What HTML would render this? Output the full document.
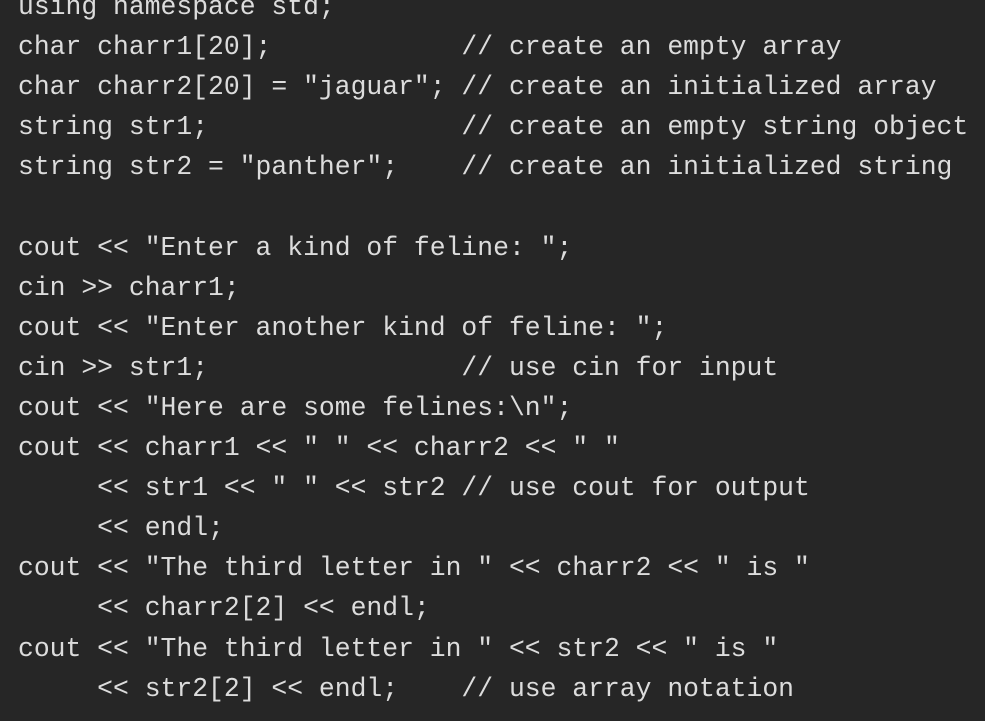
<!DOCTYPE html>
<html><head><style>
html,body{margin:0;padding:0;width:985px;height:721px;overflow:hidden;background:#262626;}
pre{position:absolute;left:18px;top:-13px;margin:0;font-family:"Liberation Mono",monospace;font-size:26.4px;line-height:40.1px;color:#dcdcdc;}
</style></head><body><pre>using namespace std;
char charr1[20];            // create an empty array
char charr2[20] = "jaguar"; // create an initialized array
string str1;                // create an empty string object
string str2 = "panther";    // create an initialized string

cout &lt;&lt; "Enter a kind of feline: ";
cin &gt;&gt; charr1;
cout &lt;&lt; "Enter another kind of feline: ";
cin &gt;&gt; str1;                // use cin for input
cout &lt;&lt; "Here are some felines:\n";
cout &lt;&lt; charr1 &lt;&lt; " " &lt;&lt; charr2 &lt;&lt; " "
     &lt;&lt; str1 &lt;&lt; " " &lt;&lt; str2 // use cout for output
     &lt;&lt; endl;
cout &lt;&lt; "The third letter in " &lt;&lt; charr2 &lt;&lt; " is "
     &lt;&lt; charr2[2] &lt;&lt; endl;
cout &lt;&lt; "The third letter in " &lt;&lt; str2 &lt;&lt; " is "
     &lt;&lt; str2[2] &lt;&lt; endl;    // use array notation</pre></body></html>
